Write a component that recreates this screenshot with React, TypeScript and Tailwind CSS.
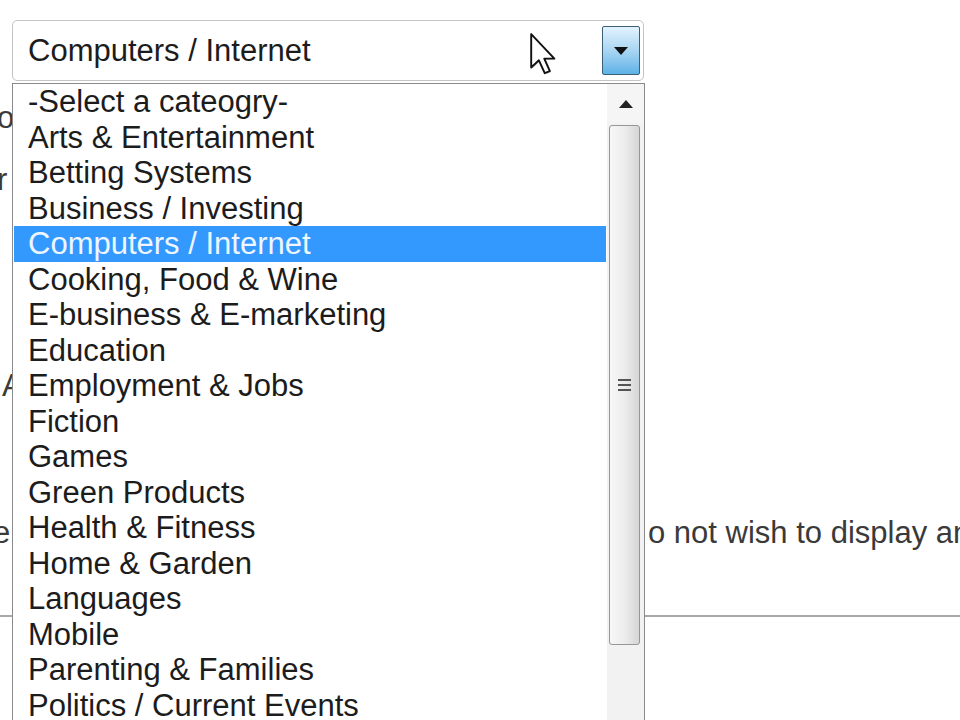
import React from "react";

const items = [
  "-Select a cateogry-",
  "Arts & Entertainment",
  "Betting Systems",
  "Business / Investing",
  "Computers / Internet",
  "Cooking, Food & Wine",
  "E-business & E-marketing",
  "Education",
  "Employment & Jobs",
  "Fiction",
  "Games",
  "Green Products",
  "Health & Fitness",
  "Home & Garden",
  "Languages",
  "Mobile",
  "Parenting & Families",
  "Politics / Current Events",
  "Reference",
];

export default function App() {
  return (
    <div
      className="relative w-[960px] h-[720px] overflow-hidden bg-white"
      style={{ fontFamily: '"Liberation Sans", Arial, sans-serif' }}
    >
      {/* background page */}
      <div className="flex flex-col text-[31px] leading-[36px] text-[#3a3a3a]">
        <div className="h-[100px]" />
        <div className="-ml-[3px]">o</div>
        <div className="h-[26px]" />
        <div className="-ml-[3px]">r</div>
        <div className="h-[170px]" />
        <div className="ml-[2px]">A</div>
        <div className="h-[111px]" />
        <div className="flex">
          <span className="-ml-[7px] w-[655px] shrink-0">e</span>
          <span className="whitespace-nowrap shrink-0">o not wish to display any</span>
        </div>
        <div className="h-[64px]" />
        <div className="h-[2px] bg-[#a8a8a8]" />
      </div>

      {/* select box */}
      <div className="absolute left-[12px] top-[20px] w-[632px] h-[61px] flex items-center justify-between pl-[15px] pr-[3px] bg-white border border-[#c4c4c4] rounded-[5px] text-[31px] text-[#1c1c1c]">
        <span className="leading-none">Computers / Internet</span>
        <div className="w-[38px] h-[49px] flex items-center justify-center border border-[#3d5f78] rounded-[2px] bg-gradient-to-b from-[#e3f3fd] via-[#a9d6f3] to-[#5cb2e6]">
          <svg width="14" height="8" viewBox="0 0 14 8">
            <path d="M0 0 L14 0 L7 8 Z" fill="#111" />
          </svg>
        </div>
      </div>

      {/* dropdown list */}
      <div className="absolute left-[12px] top-[83px] w-[633px] h-[660px] flex bg-white border border-[#8a8a8a]">
        <div className="flex-1 flex flex-col px-[1px] text-[31px] text-[#1c1c1c]">
          {items.map((it, i) => (
            <div
              key={it}
              className={
                i === 4
                  ? "h-[35.5px] leading-[35.5px] pl-[14px] whitespace-nowrap bg-[#3399ff] text-[#eef6ff]"
                  : "h-[35.5px] leading-[35.5px] pl-[14px] whitespace-nowrap"
              }
            >
              {it}
            </div>
          ))}
        </div>
        <div className="w-[37px] flex flex-col bg-[#f2f2f2]">
          <div className="h-[39px] flex items-center justify-center bg-[#f5f5f5]">
            <svg width="14" height="8" viewBox="0 0 14 8">
              <path d="M0 8 L14 8 L7 0 Z" fill="#222" />
            </svg>
          </div>
          <div className="ml-[2px] mt-[2px] w-[31px] h-[520px] flex items-center justify-center rounded-[3px] border border-[#979797] bg-gradient-to-r from-[#f7f7f7] via-[#ececec] to-[#d6d6d6]">
            <div className="flex flex-col gap-[3px]">
              <div className="w-[13px] h-[2px] bg-[#555]" />
              <div className="w-[13px] h-[2px] bg-[#555]" />
              <div className="w-[13px] h-[2px] bg-[#555]" />
            </div>
          </div>
        </div>
      </div>

      {/* mouse cursor */}
      <svg
        className="absolute left-[529px] top-[32px]"
        width="28"
        height="44"
        viewBox="0 0 13 20.5"
      >
        <path
          d="M1.6 1.6 L1.6 17.1 L5.2 13.8 L7.9 19.8 L10.3 18.8 L7.7 13 L12.4 13 Z"
          fill="#888"
          opacity="0.25"
        />
        <path
          d="M1 1 L1 16.5 L4.6 13.2 L7.3 19.2 L9.7 18.2 L7.1 12.4 L11.8 12.4 Z"
          fill="#fff"
          stroke="#111"
          strokeWidth="0.9"
          strokeLinejoin="round"
        />
      </svg>
    </div>
  );
}
